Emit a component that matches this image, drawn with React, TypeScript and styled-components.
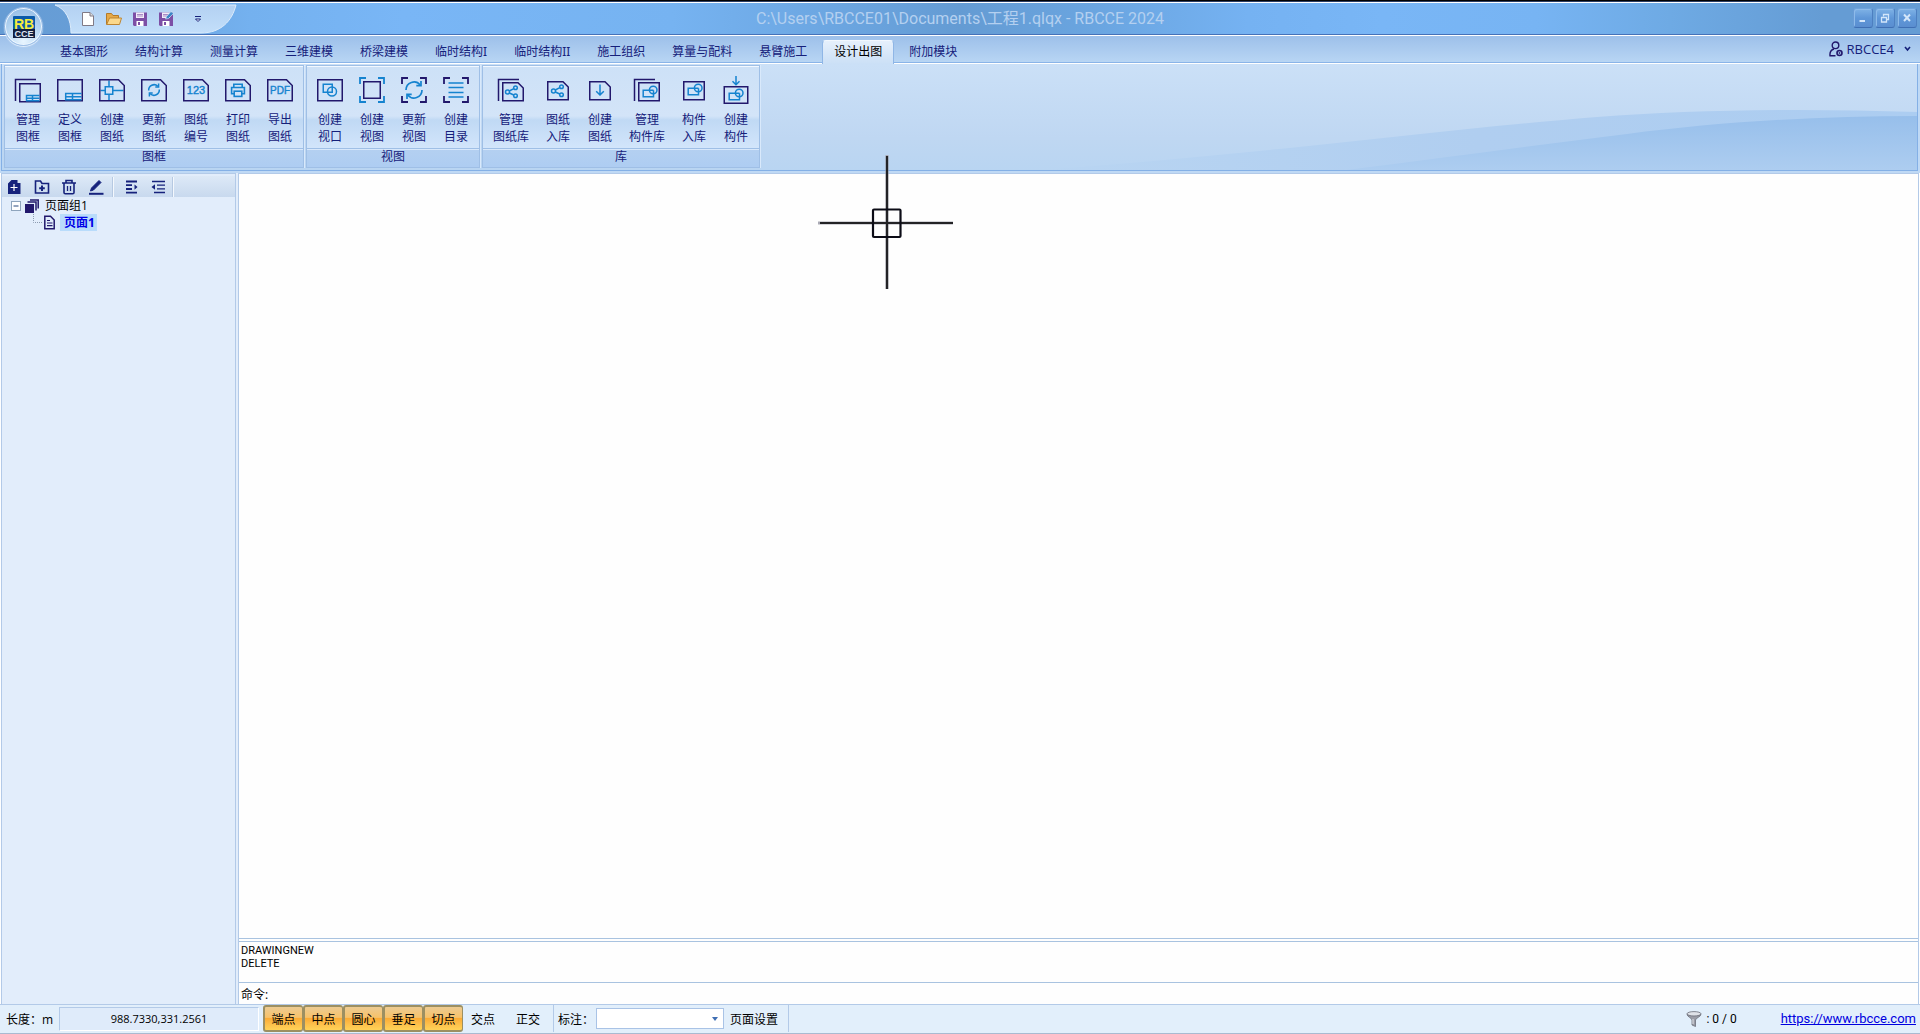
import React from "react";
import styled, { createGlobalStyle, css } from "styled-components";

const GlobalStyle = createGlobalStyle`
  * { box-sizing: border-box; }
  html, body { margin: 0; padding: 0; }
  body {
    font-family: "Open Sans", "Noto Sans CJK SC", sans-serif;
    font-size: 12px;
    color: #000;
    background: #bfd9f5;
  }
  button, input, select { font: inherit; color: inherit; }
  svg { display: block; flex: none; }
`;

const navy = "#15207a";
const ink = "#22186c";
const cyan = "#1583cf";
const line = "#9fbfe6";
const narrow = `Roboto, "Noto Sans CJK SC", sans-serif`;

const Window = styled.div`
  display: flex;
  flex-direction: column;
  height: 100vh;
  min-height: 480px;
  overflow: hidden;
  position: relative;
`;

/* ---------- title bar ---------- */

const TitleBar = styled.header`
  display: grid;
  grid-template-columns: 1fr auto 1fr;
  align-items: center;
  flex: none;
  height: 36px;
  border-top: 1px solid #000;
  border-bottom: 1px solid #fff;
  box-shadow: inset 0 1px 0 #2c3f66, inset 0 2px 0 #fff, inset 0 -1px 0 #4672b8;
  background: linear-gradient(
    90deg,
    #669cd4 0%,
    #679ed7 5%,
    #74b1ef 13%,
    #79b6f6 21%,
    #76b3f1 35%,
    #6ba5e0 44%,
    #649bd3 50%,
    #6aa5e0 57%,
    #75b2f2 65%,
    #79b6f6 72%,
    #77b4f3 80%,
    #6eaae4 87%,
    #659cd4 95%,
    #659cd4 100%
  );
`;

const QuickAccess = styled.div`
  position: relative;
  display: flex;
  align-items: center;
  height: 32px;
  padding: 1px 0 0 75px;
`;

const QuickShape = styled.svg`
  position: absolute;
  left: 55px;
  top: 2px;
`;

const QuickButton = styled.button<{ $spaced?: boolean }>`
  position: relative;
  display: grid;
  place-items: center;
  width: 26px;
  height: 24px;
  padding: 0;
  margin-left: ${(p) => (p.$spaced ? 6 : 0)}px;
  border: 0;
  background: none;
`;

const Title = styled.h1`
  margin: 0;
  padding-top: 2px;
  font-family: ${narrow};
  font-size: 16px;
  line-height: 20px;
  font-weight: 400;
  color: #b4d0f0;
  white-space: nowrap;
`;

const WindowControls = styled.div`
  display: flex;
  justify-content: flex-end;
  gap: 2px;
  padding-right: 3px;
`;

const WindowButton = styled.button`
  display: grid;
  place-items: center;
  width: 20px;
  height: 20px;
  padding: 0;
  border: 1px solid #5386c4;
  border-color: #6fa3dc #4d7fc0 #3f6fb4 #6a9cd6;
  border-radius: 3px;
  background: linear-gradient(#7fb2e6, #5f97d8 50%, #5a8ed0);
  box-shadow: inset 1px 1px 0 #8dbbea;
  color: #d3e6fa;
`;

const AppButton = styled.button`
  position: absolute;
  z-index: 3;
  left: 4px;
  top: 7px;
  display: grid;
  place-items: center;
  width: 39px;
  height: 39px;
  padding: 0;
  border: 1px solid #9fc0e8;
  border-radius: 50%;
  background: radial-gradient(circle at 50% 90%, #e8f5ff 0%, #bfdcf5 40%, #8ab5e2 100%);
  box-shadow: inset 0 0 0 1px #eef7ff, 0 1px 1px #e7f2fd;
`;

/* ---------- tabs ---------- */

const TabRow = styled.nav`
  display: flex;
  align-items: flex-end;
  justify-content: space-between;
  flex: none;
  height: 28px;
  padding-left: 48px;
  border-bottom: 1px solid #fff;
  box-shadow: inset 0 -1px 0 #8ab4e8;
  background: linear-gradient(#9dc0ea, #b9d6f4);
`;

const Tabs = styled.div`
  display: flex;
  gap: 3px;
  height: 24px;
  margin-bottom: -1px;
  font-family: "Noto Sans", "Noto Sans CJK SC", sans-serif;
`;

const Tab = styled.button<{ $active?: boolean }>`
  height: 25px;
  padding: 0 12px 2px;
  border: 0;
  background: none;
  color: ${navy};
  line-height: 20px;
  white-space: nowrap;
  ${(p) =>
    p.$active &&
    css`
      color: #000;
      border: 1px solid #8fb6e6;
      border-bottom: 0;
      border-top-color: #f2f8ff;
      border-radius: 4px 4px 0 0;
      padding: 0 11px 3px;
      background: linear-gradient(#e6f0fc, #cadff6);
    `}
`;

const UserButton = styled.button`
  display: flex;
  align-items: center;
  gap: 4px;
  height: 24px;
  margin-bottom: 2px;
  padding: 0 9px 0 0;
  border: 0;
  background: none;
  color: ${navy};
  font-size: 13px;
`;

const Chevron = styled.svg`
  margin-left: 1px;
`;

/* ---------- ribbon ---------- */

const Ribbon = styled.section`
  position: relative;
  display: flex;
  gap: 2px;
  flex: none;
  height: 107px;
  margin: 0 2px 0 1px;
  padding: 1px 2px 2px;
  border: 1px solid #84b0e6;
  border-top: 0;
  background: linear-gradient(#cbe0f7, #bfd7f2 70%, #b9d5f2);
`;

const Swoosh = styled.svg`
  position: absolute;
  right: 0;
  bottom: 0;
`;

const Group = styled.div`
  position: relative;
  display: flex;
  flex-direction: column;
  padding: 0 2px;
  border: 1px solid ${line};
  box-shadow: inset 0 1px 0 #f2f8ff, 1px 0 0 #d9e9fb;
  background: linear-gradient(#cde1f7 0, #d3e4f8 50px, #c0d9f4 54px, #d2e5fb 82px, #b4d0f1 83px, #aecdf2 100%);
`;

const GroupItems = styled.div`
  display: flex;
  height: 82px;
`;

const GroupLabel = styled.div`
  margin: 0 -2px;
  border-top: 1px solid ${line};
  box-shadow: inset 0 1px 0 #d8e8fb;
  color: ${navy};
  line-height: 15px;
  text-align: center;
`;

const Tool = styled.button<{ $wide?: boolean }>`
  display: flex;
  flex-direction: column;
  align-items: center;
  gap: 7px;
  width: ${(p) => (p.$wide ? 52 : 42)}px;
  padding: 10px 0 0;
  border: 0;
  background: none;
  color: ${navy};
`;

const ToolText = styled.span`
  line-height: 17px;
  white-space: pre;
`;

/* ---------- workspace ---------- */

const Workspace = styled.main`
  display: flex;
  flex: 1;
  min-height: 0;
  margin-top: 2px;
  padding: 0 1px;
  background: #fff;
`;

const SidePanel = styled.aside`
  display: flex;
  flex-direction: column;
  flex: none;
  width: 235px;
  padding-top: 2px;
  border: 1px solid #b3cae8;
  border-bottom: 0;
  background: #e2edfb;
`;

const TreeToolbar = styled.div`
  display: flex;
  align-items: center;
  height: 21px;
  background: linear-gradient(#dde9f7, #c8d9ee);
`;

const TreeButton = styled.button`
  display: flex;
  align-items: center;
  justify-content: flex-start;
  width: 27px;
  height: 20px;
  padding: 0 0 0 5px;
  border: 0;
  background: none;
  color: #16227c;
`;

const Divider = styled.span`
  width: 2px;
  height: 20px;
  margin: 0 2px;
  border-left: 1px solid #b6c9e2;
  background: #f4f8fd;
`;

const Tree = styled.ul`
  margin: 0;
  padding: 0;
  list-style: none;
`;

const TreeRow = styled.div<{ $child?: boolean }>`
  display: flex;
  align-items: center;
  gap: 4px;
  height: 17px;
  padding-left: ${(p) => (p.$child ? 30 : 9)}px;
`;

const TreeLabel = styled.span<{ $selected?: boolean }>`
  line-height: 17px;
  padding: 0 2px;
  ${(p) =>
    p.$selected &&
    css`
      font-weight: 700;
      color: #0000e6;
      background: #b9dcfb;
      padding: 0 2px 0 4px;
    `}
`;

const Splitter = styled.div`
  flex: none;
  width: 3px;
  border-right: 1px solid #b3cae8;
  background: #e2edfb;
`;

const Right = styled.div`
  display: flex;
  flex-direction: column;
  flex: 1;
  min-width: 0;
  border: 1px solid #b3cae8;
  border-left: 0;
  border-bottom: 0;
`;

const Canvas = styled.div`
  position: relative;
  flex: 1;
  min-height: 0;
  background: #fefefe;
`;

const Crosshair = styled.svg`
  position: absolute;
  z-index: 2;
  left: 579px;
  top: -20px;
`;

const CommandPane = styled.section`
  flex: none;
  border-top: 1px solid #a9c3e0;
  background: #fefefe;
  padding-left: 2px;
`;

const History = styled.div`
  height: 42px;
  margin: 2px 0 0 -2px;
  padding: 2px 0 0 2px;
  border-top: 1px solid #a9c3e0;
  border-bottom: 1px solid #a9c3e0;
  font-family: ${narrow};
  font-size: 11px;
  line-height: 13px;
`;

const Prompt = styled.label`
  display: flex;
  align-items: center;
  gap: 4px;
  height: 20px;
  margin-top: 1px;
`;

const PromptInput = styled.input`
  flex: 1;
  height: 17px;
  padding: 0;
  border: 0;
  outline: 0;
  background: none;
`;

/* ---------- status bar ---------- */

const StatusBar = styled.footer`
  display: flex;
  align-items: center;
  flex: none;
  height: 30px;
  padding-bottom: 1px;
  border-top: 1px solid #b3cae8;
  border-bottom: 1px solid #a9bad0;
  background: #e2effb;
  white-space: nowrap;
`;

const Unit = styled.span`
  width: 59px;
  padding-left: 6px;
`;

const Coordinates = styled.output`
  width: 200px;
  height: 24px;
  margin-right: 4px;
  border: 1px solid #b3cae8;
  border-color: #b3cae8 #fff #fff #b3cae8;
  background: #dfebfa;
  font-size: 11px;
  line-height: 22px;
  text-align: center;
`;

const Snap = styled.button<{ $on?: boolean }>`
  width: ${(p) => (p.$on ? 40 : 45)}px;
  height: 27px;
  padding: 0 5px 0 0;
  border: 0;
  background: none;
  ${(p) =>
    p.$on &&
    css`
      padding: 0;
      border: 2px solid #9c8f62;
      border-right-width: 1px;
      border-radius: 3px;
      background: linear-gradient(#eccb93 0%, #f7c26a 45%, #fbab35 50%, #fdc04b 75%, #ffd257 100%);
    `}
`;

const StatusDivider = styled.span`
  width: 1px;
  height: 27px;
  background: #b3cae8;
`;

const DimensionLabel = styled.label`
  padding: 0 2px 0 4px;
`;

const SelectBox = styled.span`
  position: relative;
  display: flex;
  width: 128px;
  height: 21px;
`;

const DimensionSelect = styled.select`
  width: 100%;
  height: 100%;
  border: 1px solid #a9c3e6;
  border-radius: 0;
  background: #fff;
  appearance: none;
`;

const SelectArrow = styled.svg`
  position: absolute;
  right: 6px;
  top: 9px;
  pointer-events: none;
`;

const PageSetup = styled.button`
  height: 27px;
  padding: 0 10px 0 6px;
  border: 0;
  background: none;
`;

const Filter = styled.span`
  display: flex;
  align-items: center;
  gap: 4px;
  margin-left: auto;
  font-family: ${narrow};
`;

const SiteLink = styled.a`
  margin: 0 4px 0 44px;
  font-family: ${narrow};
  font-size: 13px;
  color: #0000e0;
`;

/* ---------- drawings ---------- */

const Icon = ({ children }: { children: React.ReactNode }) => (
  <svg width="28" height="28" viewBox="0 0 28 28" fill="none" stroke={ink} strokeWidth="1.5" aria-hidden="true">
    {children}
  </svg>
);

const Sheet = () => <path d="M1.75 3.75H20.5L26.25 9.5V24.75H1.75Z" />;
const SmallSheet = ({ x = 0, y = 0 }: { x?: number; y?: number }) => (
  <path transform={`translate(${x} ${y})`} d="M3.75 5.75H19L24.25 11V23.75H3.75Z" />
);
const Stack = () => <path d="M1.5 25V3.5H22" />;
const Brackets = ({ color }: { color?: string }) => (
  <path
    stroke={color}
    strokeWidth="1.8"
    d="M2 8V2H8M20 2H26V8M26 20V26H20M8 26H2V20"
  />
);
const Share = ({ x = 0, y = 0 }: { x?: number; y?: number }) => (
  <g stroke={cyan} transform={`translate(${x} ${y})`}>
    <circle cx="9.5" cy="15" r="2" />
    <circle cx="17.5" cy="10.8" r="1.8" />
    <circle cx="17.5" cy="18.8" r="1.8" />
    <path d="M11.3 14L15.8 11.7M11.3 16L15.8 18" />
  </g>
);
const Parts = ({ x = 0, y = 0 }: { x?: number; y?: number }) => (
  <g stroke={cyan} transform={`translate(${x} ${y})`}>
    <path d="M18.5 12.2H8.2V18.7H18.5V12.2" />
    <circle cx="18.2" cy="12" r="3.8" />
  </g>
);
const Refresh = () => (
  <g stroke={cyan}>
    <path d="M8.7 14.5A5.4 5.4 0 0 1 17.8 10.2M19.3 13.5A5.4 5.4 0 0 1 10.2 17.8" />
    <path d="M18.6 7.6V10.9H15.3M9.4 20.4V17.1H12.7" />
  </g>
);
const SheetText = ({ children, size }: { children: string; size: number }) => (
  <text x="14" y="18" textAnchor="middle" fontFamily="Liberation Sans, sans-serif" fontSize={size} fill={cyan} stroke={cyan} strokeWidth=".4">
    {children}
  </text>
);

const icons: Record<string, React.ReactNode> = {
  frames: (
    <>
      <Stack />
      <rect x="5.75" y="7.75" width="20.5" height="18" />
      <path stroke={cyan} d="M12.5 25V19.5H25.5M12 22.3H25.5M18.5 19.5V25M12 24.8H25.5" />
    </>
  ),
  define: (
    <>
      <rect x="1.75" y="3.75" width="24.5" height="21" />
      <path stroke={cyan} d="M9.7 24V17.5H25.5M9.5 20.8H25.5M16.5 17.5V24M9 23.8H25.5" />
    </>
  ),
  sheetCross: (
    <>
      <path stroke={cyan} d="M11 4.5V10.5M11 18.5V24M2.5 14.5H7M15 14.5H25.5" />
      <rect stroke={cyan} x="7.25" y="10.75" width="7.5" height="7.5" />
      <Sheet />
    </>
  ),
  sheetRefresh: (
    <>
      <Sheet />
      <Refresh />
    </>
  ),
  number: (
    <>
      <Sheet />
      <SheetText size={11}>123</SheetText>
    </>
  ),
  print: (
    <>
      <Sheet />
      <g stroke={cyan} strokeWidth="1.6">
        <path d="M9.8 11V8.2H18.2V11" />
        <path d="M10 17.8H7.6V11.5H20.4V17.8H18" />
        <rect x="10.2" y="15.2" width="7.6" height="5.2" />
      </g>
    </>
  ),
  pdf: (
    <>
      <Sheet />
      <SheetText size={10}>PDF</SheetText>
    </>
  ),
  viewport: (
    <>
      <rect x="1.75" y="3.75" width="24.5" height="21" />
      <rect stroke={cyan} x="7.25" y="8.25" width="9" height="8" />
      <circle stroke={cyan} cx="16" cy="15.5" r="4.5" />
    </>
  ),
  view: (
    <>
      <Brackets color={cyan} />
      <rect x="5.75" y="5.75" width="16.5" height="16.5" />
    </>
  ),
  viewRefresh: (
    <>
      <Brackets />
      <g stroke={cyan} strokeWidth="1.7">
        <path d="M6 14A8 8 0 0 1 20.2 9M22 14A8 8 0 0 1 7.8 19" />
        <path d="M21 5V9.7H16.3M7 23V18.3H11.7" />
      </g>
    </>
  ),
  list: (
    <>
      <Brackets />
      <path stroke={cyan} d="M6.5 7H21.5M6.5 11.5H21.5M6.5 16.5H21.5M6.5 21H21.5" />
    </>
  ),
  sheetLibrary: (
    <>
      <Stack />
      <SmallSheet x={2} y={1} />
      <Share x={1} y={1} />
    </>
  ),
  sheetStore: (
    <>
      <SmallSheet />
      <Share />
    </>
  ),
  sheetDown: (
    <>
      <SmallSheet />
      <path stroke={cyan} d="M14 8.5V19M10.2 15.2L14 19L17.8 15.2" />
    </>
  ),
  partLibrary: (
    <>
      <Stack />
      <rect x="5.75" y="6.75" width="20.5" height="18" />
      <Parts x={2} y={2} />
    </>
  ),
  partStore: (
    <>
      <rect x="3.75" y="5.75" width="20.5" height="18" />
      <Parts />
    </>
  ),
  partCreate: (
    <>
      <rect x="2.25" y="10.75" width="23.5" height="16.5" />
      <path stroke={cyan} d="M14 0V8.5M10.5 5.2L14 8.7L17.5 5.2" />
      <Parts x={-1} y={5} />
    </>
  ),
};

type ToolSpec = [icon: string, top: string, bottom: string, wide?: boolean];

const groups: { name: string; tools: ToolSpec[] }[] = [
  {
    name: "图框",
    tools: [
      ["frames", "管理", "图框"],
      ["define", "定义", "图框"],
      ["sheetCross", "创建", "图纸"],
      ["sheetRefresh", "更新", "图纸"],
      ["number", "图纸", "编号"],
      ["print", "打印", "图纸"],
      ["pdf", "导出", "图纸"],
    ],
  },
  {
    name: "视图",
    tools: [
      ["viewport", "创建", "视口"],
      ["view", "创建", "视图"],
      ["viewRefresh", "更新", "视图"],
      ["list", "创建", "目录"],
    ],
  },
  {
    name: "库",
    tools: [
      ["sheetLibrary", "管理", "图纸库", true],
      ["sheetStore", "图纸", "入库"],
      ["sheetDown", "创建", "图纸"],
      ["partLibrary", "管理", "构件库", true],
      ["partStore", "构件", "入库"],
      ["partCreate", "创建", "构件"],
    ],
  },
];

const tabs = [
  "基本图形", "结构计算", "测量计算", "三维建模", "桥梁建模", "临时结构I",
  "临时结构II", "施工组织", "算量与配料", "悬臂施工", "设计出图", "附加模块",
];

const snaps: [string, boolean][] = [
  ["端点", true], ["中点", true], ["圆心", true], ["垂足", true],
  ["切点", true], ["交点", false], ["正交", false],
];

const Floppy = ({ pen }: { pen?: boolean }) => (
  <svg width="16" height="16" viewBox="0 0 16 16">
    <path d="M1 1.5H15V15H2L1 14Z" fill="#7d4fa6" />
    <path d="M4 1.5H12V7H4Z" fill="#f3edf8" />
    <path d="M5 3.5H11M5 5H11" stroke="#a98bc6" />
    <path d="M4.5 10H11.5V15H4.5Z" fill="#fff" />
    <path d="M6 11H8V14H6Z" fill="#7d4fa6" />
    {pen && <path d="M7.5 8L8.5 5.5L13 0.5L15.5 2.5L10.5 7.5Z" fill="#3d86c6" stroke="#e4f0fb" strokeWidth=".6" />}
  </svg>
);

const Logo = () => (
  <svg width="22" height="22" viewBox="0 0 22 22">
    <rect width="22" height="22" rx="1" fill="#0b5aa8" />
    <rect y="13" width="22" height="9" fill="#14203f" />
    <text x="11" y="12.5" textAnchor="middle" fontFamily="Liberation Sans, sans-serif" fontSize="14" fontWeight="700" fill="#f7ee3c">RB</text>
    <text x="11" y="20.5" textAnchor="middle" fontFamily="Liberation Sans, sans-serif" fontSize="9" fontWeight="700" fill="#dfe6f2">CCE</text>
  </svg>
);

export default function App() {
  return (
    <>
      <GlobalStyle />
      <Window>
        <AppButton aria-label="RBCCE"><Logo /></AppButton>
        <TitleBar>
          <QuickAccess>
            <QuickShape width="184" height="30" viewBox="0 0 184 30">
              <defs>
                <linearGradient id="quick" x1="0" y1="0" x2="0" y2="1">
                  <stop offset="0" stopColor="#b3d1f2" />
                  <stop offset="1" stopColor="#c3dffa" />
                </linearGradient>
              </defs>
              <path d="M0 1C11 5 16 16 16 29H146C166 29 177 17 181 1Z" fill="url(#quick)" stroke="#dcebfb" />
            </QuickShape>
            <QuickButton aria-label="New">
              <svg width="16" height="16" viewBox="0 0 16 16">
                <path d="M2.5 1.5H10L13.5 5V14.5H2.5Z" fill="#fff" stroke="#807a86" />
                <path d="M10 1.5V5H13.5" fill="#ddd" stroke="#807a86" />
              </svg>
            </QuickButton>
            <QuickButton aria-label="Open">
              <svg width="16" height="16" viewBox="0 0 16 16">
                <path d="M.5 13.5V2.5H5.5L7 4.5H12.5V7" fill="#e6a947" stroke="#b47a28" />
                <path d="M.7 13.5L3.5 7H15.5L13.5 13.5Z" fill="#fbd88c" stroke="#bd8532" />
              </svg>
            </QuickButton>
            <QuickButton aria-label="Save"><Floppy /></QuickButton>
            <QuickButton aria-label="Save as"><Floppy pen /></QuickButton>
            <QuickButton aria-label="Customize" $spaced>
              <svg width="8" height="8" viewBox="0 0 8 8">
                <path d="M1 1.5H7" stroke={navy} />
                <path d="M1.5 4H6.5L4 6.5Z" fill="#fff" stroke={navy} />
              </svg>
            </QuickButton>
          </QuickAccess>
          <Title>C:\Users\RBCCE01\Documents\工程1.qlqx - RBCCE 2024</Title>
          <WindowControls>
            <WindowButton aria-label="Minimize">
              <svg width="10" height="10" viewBox="0 0 10 10"><path d="M1.5 8H7" stroke="currentColor" strokeWidth="2" /></svg>
            </WindowButton>
            <WindowButton aria-label="Restore">
              <svg width="10" height="10" viewBox="0 0 10 10" fill="none" stroke="currentColor" strokeWidth="1.3"><path d="M3.5 3.5V1.5H8.5V6.5H6.5" /><path d="M1.5 4.5H6.5V9H1.5Z" /></svg>
            </WindowButton>
            <WindowButton aria-label="Close">
              <svg width="10" height="10" viewBox="0 0 10 10"><path d="M2 1.5L8 8M8 1.5L2 8" stroke="currentColor" strokeWidth="2" /></svg>
            </WindowButton>
          </WindowControls>
        </TitleBar>

        <TabRow>
          <Tabs>
            {tabs.map((t) => (
              <Tab key={t} $active={t === "设计出图"}>{t}</Tab>
            ))}
          </Tabs>
          <UserButton>
            <svg width="14" height="16" viewBox="0 0 14 16" fill="none" stroke={ink} strokeWidth="1.4">
              <circle cx="6.5" cy="4.3" r="3.3" />
              <path d="M6.5 14.8H1C.6 11 2 8.8 5 8" />
              <circle cx="10.5" cy="12" r="2.5" strokeWidth="1.6" />
              <circle cx="10.5" cy="12" r=".6" strokeWidth="1" />
            </svg>
            RBCCE4
            <Chevron width="12" height="8" viewBox="0 0 12 8" fill="none" stroke={navy} strokeWidth="1.6">
              <path d="M6 2L8.5 5L11 2" />
            </Chevron>
          </UserButton>
        </TabRow>

        <Ribbon>
          <Swoosh width="880" height="62" viewBox="0 0 880 62" aria-hidden="true">
            <defs>
              <linearGradient id="wave" x1="0" y1="0" x2="0" y2="1">
                <stop offset="0" stopColor="#97bfeb" />
                <stop offset="1" stopColor="#adcdf0" />
              </linearGradient>
              <linearGradient id="haze" x1="0" y1="0" x2="1" y2="0">
                <stop offset="0" stopColor="#b9d5f2" />
                <stop offset=".5" stopColor="#b0cef0" />
                <stop offset="1" stopColor="#accdf1" />
              </linearGradient>
            </defs>
            <path d="M0 62C90 56 180 47 262 39C360 29 450 18 560 9C650 2 760 0 880 4V62Z" fill="url(#haze)" />
            <path d="M310 62C420 48 500 37 590 26C680 14 780 8 880 8V62Z" fill="url(#wave)" />
          </Swoosh>
          {groups.map((g) => (
            <Group key={g.name}>
              <GroupItems>
                {g.tools.map(([icon, top, bottom, wide]) => (
                  <Tool key={icon} $wide={wide}>
                    <Icon>{icons[icon]}</Icon>
                    <ToolText>{top + "\n" + bottom}</ToolText>
                  </Tool>
                ))}
              </GroupItems>
              <GroupLabel>{g.name}</GroupLabel>
            </Group>
          ))}
        </Ribbon>

        <Workspace>
          <SidePanel>
            <TreeToolbar>
              <TreeButton aria-label="Add page">
                <svg width="14" height="16" viewBox="0 0 14 16"><path d="M1 4.5L4.5 1H10.5V4H13.5V15H1Z" fill="currentColor" /><path d="M7 5V12M3.5 8.5H10.5" stroke="#fff" strokeWidth="1.2" /></svg>
              </TreeButton>
              <TreeButton aria-label="Add group">
                <svg width="16" height="16" viewBox="0 0 16 16" fill="none" stroke="currentColor" strokeWidth="1.6"><path d="M1.5 14V2H6.5L8 4.5H14.5V14Z" /><path d="M8 6.5V12M5.2 9.2H10.8" strokeWidth="2" /></svg>
              </TreeButton>
              <TreeButton aria-label="Delete">
                <svg width="16" height="16" viewBox="0 0 16 16" fill="none" stroke="currentColor" strokeWidth="1.6"><path d="M1 4H15M5 3.5V1.5H11V3.5M3 4.5V13.5Q3 14.8 4.3 14.8H11.7Q13 14.8 13 13.5V4.5" /><path d="M6.5 7V12M9.5 7V12" strokeWidth="1.3" /></svg>
              </TreeButton>
              <TreeButton aria-label="Edit">
                <svg width="16" height="16" viewBox="0 0 16 16" fill="none" stroke="currentColor"><path d="M2.5 12L3.5 9L11 1.5L13 3.5L5.5 11Z" fill="currentColor" /><path d="M1 14.8H15.5" strokeWidth="2" /></svg>
              </TreeButton>
              <Divider />
              <TreeButton aria-label="Indent">
                <svg width="20" height="14" viewBox="-4 0 20 14" stroke="currentColor" strokeWidth="1.8"><path d="M1 1.5H12M1 5.2H7M1 9H7M1 12.7H12" /><path d="M9.5 4.5L12.5 7.1L9.5 9.7Z" fill="currentColor" stroke="none" /></svg>
              </TreeButton>
              <TreeButton aria-label="Outdent">
                <svg width="20" height="14" viewBox="-3 0 20 14" stroke="currentColor" strokeWidth="1.3"><path d="M1 1.5H14M6 5.2H14M6 8.8H14M3 12.5H14" /><path d="M4 4.2L.5 7L4 9.8Z" fill="currentColor" stroke="none" /></svg>
              </TreeButton>
              <Divider />
            </TreeToolbar>
            <Tree role="tree">
              <li role="treeitem" aria-expanded="true">
                <TreeRow>
                  <svg width="10" height="10" viewBox="0 0 10 10"><rect x=".5" y=".5" width="9" height="9" fill="#fff" stroke="#8fa5bd" /><path d="M2.5 5H7.5" stroke="#28487c" /></svg>
                  <svg width="14" height="14" viewBox="0 0 14 14"><path d="M0 5H9V14H0Z" fill={ink} /><path d="M2.5 3H11V11.5M5 1H13.2V9.5" fill="none" stroke={ink} strokeWidth="1.5" /></svg>
                  <TreeLabel>页面组1</TreeLabel>
                </TreeRow>
                <Tree role="group">
                  <li role="treeitem" aria-selected="true">
                    <TreeRow $child>
                      <svg width="24" height="17" viewBox="0 0 24 17" fill="none">
                        <path d="M1.5 0V8.5H11" stroke="#8c9bb0" strokeDasharray="1 1" />
                        <path d="M12.8 2.3H18.5L22.2 6V14.7H12.8Z" stroke={ink} strokeWidth="1.5" />
                        <path d="M15 6.5H18M15 9H20.5M15 11.7H20.5" stroke={ink} strokeWidth="1.2" />
                      </svg>
                      <TreeLabel $selected>页面1</TreeLabel>
                    </TreeRow>
                  </li>
                </Tree>
              </li>
            </Tree>
          </SidePanel>
          <Splitter />
          <Right>
            <Canvas>
              <Crosshair width="136" height="136" viewBox="0 0 136 136" fill="none">
                <path d="M69 1V135M0 69H135" stroke="#a9a9b4" strokeWidth="3" />
                <path d="M69 2V135M2 69H135" stroke="#232326" strokeWidth="2.2" />
                <rect x="55" y="55.5" width="27.5" height="27.5" rx="1" stroke="#0c0c16" strokeWidth="2.2" />
              </Crosshair>
            </Canvas>
            <CommandPane>
              <History>
                DRAWINGNEW<br />DELETE
              </History>
              <Prompt>
                命令:
                <PromptInput />
              </Prompt>
            </CommandPane>
          </Right>
        </Workspace>

        <StatusBar>
          <Unit>长度：m</Unit>
          <Coordinates>988.7330,331.2561</Coordinates>
          {snaps.map(([label, on]) => (
            <Snap key={label} $on={on} aria-pressed={on}>{label}</Snap>
          ))}
          <StatusDivider />
          <DimensionLabel htmlFor="dimension">标注：</DimensionLabel>
          <SelectBox>
            <DimensionSelect id="dimension" />
            <SelectArrow width="6" height="4" viewBox="0 0 6 4"><path d="M0 0H6L3 4Z" fill="#3f6fb4" /></SelectArrow>
          </SelectBox>
          <PageSetup>页面设置</PageSetup>
          <StatusDivider />
          <Filter>
            <svg width="16" height="16" viewBox="0 0 16 16">
              <path d="M1 3C1 6 6 7 6 9V14L9.5 15.5V9C9.5 7 15 6 15 3Z" fill="#9a9ca6" stroke="#6b6d78" strokeWidth=".8" />
              <ellipse cx="8" cy="2.8" rx="7" ry="2.2" fill="#dfe2e8" stroke="#6b6d78" strokeWidth=".8" />
              <path d="M7 8V13" stroke="#e6e8ee" />
            </svg>
            : 0 / 0
          </Filter>
          <SiteLink href="https://www.rbcce.com">https://www.rbcce.com</SiteLink>
        </StatusBar>
      </Window>
    </>
  );
}
